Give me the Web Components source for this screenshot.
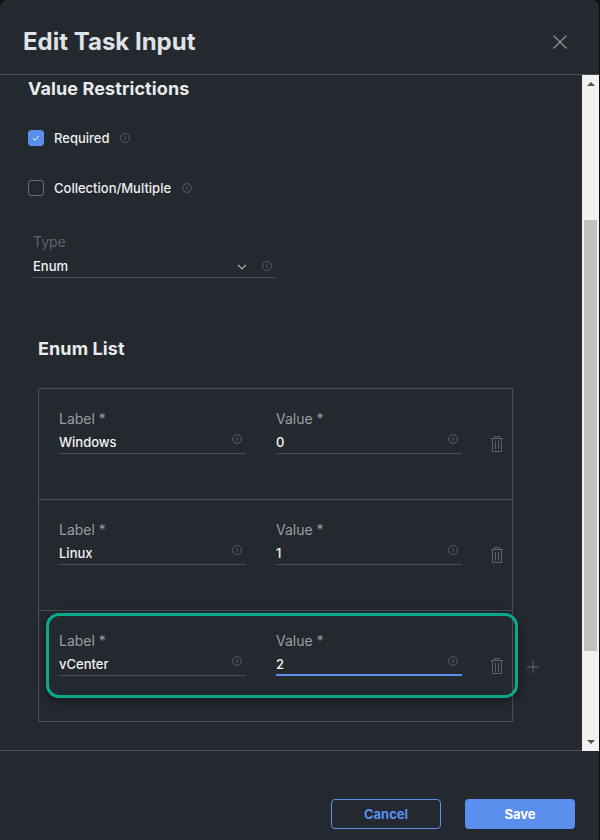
<!DOCTYPE html>
<html>
<head>
<meta charset="utf-8">
<title>Edit Task Input</title>
<style>
  html, body { margin: 0; height: 100%; background: #0d0e10; }
  body { font-family: Inter, "Liberation Sans", sans-serif; }
</style>
</head>
<body>
<task-modal heading="Edit Task Input">
  <section-title>Value Restrictions</section-title>
  <check-field checked>Required</check-field>
  <check-field style="margin-top:30px">Collection/Multiple</check-field>
  <text-field label="Type" dim style="width:243px;margin:34px 0 0 5px">Enum
    <chevron-icon slot="trail"></chevron-icon>
    <info-icon slot="trail"></info-icon>
  </text-field>
  <section-title style="margin:60px 0 0 10px">Enum List</section-title>
  <enum-list>
    <enum-row label="Windows" value="0"></enum-row>
    <enum-row label="Linux" value="1"></enum-row>
    <enum-row label="vCenter" value="2" active></enum-row>
  </enum-list>
  <app-button slot="footer" kind="outline">Cancel</app-button>
  <app-button slot="footer" kind="primary">Save</app-button>
</task-modal>

<script>
'use strict';

function define(name, css, html, setup) {
  customElements.define(name, class extends HTMLElement {
    connectedCallback() {
      if (this.shadowRoot) return;
      this.attachShadow({ mode: 'open' });
      const markup = typeof html === 'function' ? html(this) : html;
      this.shadowRoot.innerHTML = `<style>${css}</style>${markup}`;
      if (setup) setup(this);
    }
  });
}

define('info-icon', `
  :host { display: block; width: 10px; height: 10px; flex: none; }
  svg { display: block; }
`, `<svg width="10" height="10" viewBox="0 0 10 10" fill="none" stroke="#5b5f65">
  <circle cx="5" cy="5" r="4.4"/><path d="M5 3v4"/>
</svg>`);

define('chevron-icon', `
  :host { display: block; width: 10px; height: 6px; flex: none; margin: 3px 15px 0 0; }
  svg { display: block; }
`, `<svg width="10" height="6" viewBox="0 0 10 6" fill="none" stroke="#b4b6b9" stroke-width="1.2">
  <path d="M1 .8l4 4 4-4"/>
</svg>`);

define('section-title', `
  :host { display: block; font-size: 18px; line-height: 22px; font-weight: 700; letter-spacing: .1px; color: #e8eaec; }
`, `<slot></slot>`);

define('check-field', `
  :host { display: flex; align-items: center; height: 20px; font-size: 13px; font-weight: 500; color: #eceef0; }
  .box { width: 16px; height: 16px; box-sizing: border-box; border-radius: 3px; border: 1px solid #696c72; margin-right: 10px; }
  .box.on { background: #5a8fee; border-color: #5a8fee; }
  svg { display: block; margin: 3px 0 0 3px; }
  info-icon { margin-left: 11px; }
`, (el) => `
  <div class="box ${el.hasAttribute('checked') ? 'on' : ''}">
    ${el.hasAttribute('checked') ? `<svg width="8" height="8" viewBox="0 0 8 8" fill="none" stroke="#fff"><path d="M.8 4l2.2 2.2L7 1.8"/></svg>` : ''}
  </div>
  <slot></slot>
  <info-icon></info-icon>`);

define('text-field', `
  :host { display: block; font-size: 14px; }
  .label { line-height: 20px; height: 20px; margin-bottom: var(--label-gap, 4px); color: #9b9ea3; }
  :host([dim]) .label { color: #5e6268; }
  .value { display: flex; height: 21px; box-sizing: content-box; border-bottom: 1px solid #4a4e55; font-size: 13px; line-height: 20px; font-weight: 500; color: #f2f3f5; }
  .text { flex: 1; min-width: 0; }
  .trail { display: flex; align-items: flex-start; padding: var(--trail-pad, 5px 4px 0 0); }
  :host([focused]) .value { height: 20px; border-bottom: 2px solid #5a8fee; }
`, (el) => `
  <div class="label">${el.getAttribute('label')}</div>
  <div class="value">
    <div class="text"><slot></slot></div>
    <div class="trail"><slot name="trail"></slot></div>
  </div>`);

define('trash-icon', `
  :host { display: block; width: 14px; height: 18px; flex: none; }
  svg { display: block; }
`, `<svg width="14" height="18" viewBox="0 0 14 18" fill="none" stroke="#5f6369">
  <path d="M1 3.5h12M4.5 3.5v-2h5v2M2.5 3.5v13h9v-13M5.5 6v8.5M8.5 6v8.5"/>
</svg>`);

define('enum-row', `
  :host { display: flex; position: relative; height: 110px; box-sizing: content-box; padding-left: 20px; border-top: 1px solid #4a4e55; --trail-pad: 2px 4px 0 0; --label-gap: 3px; }
  :host(:first-child) { border-top: 0; }
  .fields { display: grid; grid-template-columns: 187px 186px; column-gap: 30px; padding-top: 20px; height: max-content; }
  trash-icon { margin: 46px 0 0 28px; }
  .ring { position: absolute; left: 7px; top: 2px; width: 472px; height: 85px; box-sizing: border-box; border: 3px solid #0aa98b; border-radius: 13px; box-shadow: 0 2px 8px rgba(0,0,0,.45); pointer-events: none; }
  .plus { position: absolute; left: 488px; top: 50px; display: block; }
`, (el) => {
  const active = el.hasAttribute('active');
  return `
  <div class="fields">
    <text-field label="Label *">${el.getAttribute('label')}<info-icon slot="trail"></info-icon></text-field>
    <text-field label="Value *" ${active ? 'focused' : ''}>${el.getAttribute('value')}<info-icon slot="trail"></info-icon></text-field>
  </div>
  <trash-icon></trash-icon>
  ${active ? `<div class="ring"></div>
  <svg class="plus" width="12" height="12" viewBox="0 0 12 12" stroke="#53575d" stroke-width="1.3"><path d="M6 0v12M0 6h12"/></svg>` : ''}`;
});

define('enum-list', `
  :host { display: block; width: 475px; box-sizing: border-box; margin: 28px 0 0 10px; border: 1px solid #4a4e55; }
`, `<slot></slot>`);

define('app-button', `
  :host { display: flex; align-items: center; justify-content: center; width: 110px; height: 30px; box-sizing: border-box; border-radius: 4px; font-size: 13px; font-weight: 700; }
  :host([kind=outline]) { border: 1px solid #5a8fee; color: #5a8fee; }
  :host([kind=primary]) { background: #5a8fee; color: #fff; }
`, `<slot></slot>`);

define('scroll-bar', `
  :host { display: flex; flex-direction: column; align-items: center; width: 17px; flex: none; height: 676px; background: #f1f1f1; }
  .arrow { width: 0; height: 0; border-left: 4px solid transparent; border-right: 4px solid transparent; flex: none; }
  .up { border-bottom: 4px solid #505050; margin-top: 7px; }
  .down { border-top: 4px solid #505050; margin-bottom: 7px; }
  .thumb { width: 13px; height: 431px; background: #c1c1c1; flex: none; margin-top: 134px; }
  .rest { flex: 1; }
`, `<div class="arrow up"></div><div class="thumb"></div><div class="rest"></div><div class="arrow down"></div>`);

define('task-modal', `
  :host { display: flex; flex-direction: column; width: 599px; height: 840px; background: #24282f; border-radius: 7px 7px 0 0; color: #e8eaec; overflow: hidden; }
  header { display: flex; align-items: center; justify-content: space-between; height: 74px; flex: none; box-sizing: content-box; padding: 0 31px 0 23px; border-bottom: 1px solid #4a4e55; }
  h1 { margin: 0; padding-top: 10px; font-size: 24px; font-weight: 700; line-height: 30px; color: #dfe2e6; }
  .close { display: block; margin-top: 10px; }
  .middle { display: flex; height: 675px; flex: none; border-bottom: 1px solid #4a4e55; }
  .content { flex: 1; min-width: 0; padding: 3px 0 0 28px; overflow: hidden; }
  footer { display: flex; justify-content: flex-end; gap: 24px; padding: 48px 24px 0 0; }
  ::slotted(check-field:nth-of-type(1)) { margin-top: 28px; }
`, (el) => `
  <header>
    <h1>${el.getAttribute('heading')}</h1>
    <svg class="close" width="16" height="16" viewBox="0 0 16 16" stroke="#8b8e92" stroke-width="1.4"><path d="M1.5 1.5l13 13M14.5 1.5l-13 13"/></svg>
  </header>
  <div class="middle">
    <div class="content"><slot></slot></div>
    <scroll-bar></scroll-bar>
  </div>
  <footer><slot name="footer"></slot></footer>`);
</script>
</body>
</html>
